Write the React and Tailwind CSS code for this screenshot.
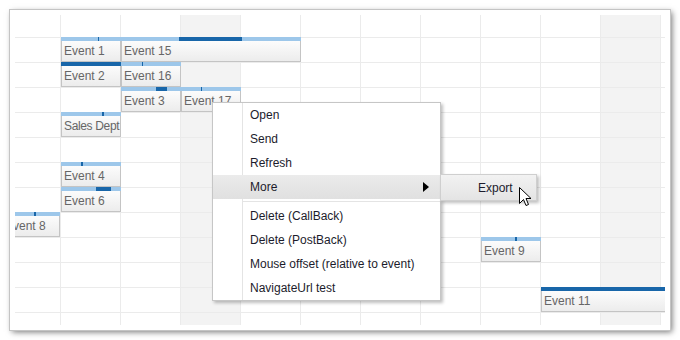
import React from "react";

const COLS = 12;
const ROWS = 13;

const events = [
  { text: "Event 1", left: 46, top: 22, w: 60, marks: [{ l: 37, w: 1 }] },
  { text: "Event 15", left: 106, top: 22, w: 180, marks: [{ l: 58, w: 63 }] },
  { text: "Event 2", left: 46, top: 47, w: 60, marks: [{ l: 0, w: 60 }] },
  { text: "Event 16", left: 106, top: 47, w: 60, marks: [{ l: 21, w: 1 }] },
  { text: "Event 3", left: 106, top: 72, w: 60, marks: [{ l: 35, w: 11 }] },
  { text: "Event 17", left: 166, top: 72, w: 60, marks: [{ l: 20, w: 1 }] },
  { text: "Sales Dept", left: 46, top: 97, w: 60, tight: true, marks: [{ l: 41, w: 2 }] },
  { text: "Event 4", left: 46, top: 147, w: 60, marks: [{ l: 20, w: 2 }] },
  { text: "Event 6", left: 46, top: 172, w: 60, marks: [{ l: 35, w: 15 }] },
  { text: "Event 8", left: -13, top: 197, w: 58, marks: [{ l: 32, w: 2 }] },
  { text: "Event 9", left: 466, top: 222, w: 60, marks: [{ l: 34, w: 2 }] },
  { text: "Event 11", left: 526, top: 272, w: 150, marks: [{ l: 0, w: 150 }] },
];

function Event({ e }) {
  return (
    <div
      className="absolute flex flex-col"
      style={{ left: e.left, top: e.top, width: e.w, height: 25 }}
    >
      <div className="relative h-[4px] bg-[#9dc7ea] shrink-0">
        {e.marks.map((m, i) => (
          <div
            key={i}
            className="absolute top-0 h-[4px] bg-[#1866a9]"
            style={{ left: m.l, width: m.w }}
          />
        ))}
      </div>
      <div
        className={
          "flex-1 flex items-center overflow-hidden whitespace-nowrap border border-t-0 border-[#c4c4c4] bg-gradient-to-b from-[#fcfcfc] to-[#ececec] pl-[2px] text-[12px] text-[#666666] " +
          (e.tight ? "tracking-[-0.35px]" : "")
        }
      >
        {e.text}
      </div>
    </div>
  );
}

function Grid() {
  const cells = [];
  for (let r = 0; r < ROWS; r++) {
    for (let c = 0; c < COLS; c++) {
      const shaded = c === 3 || c === 10;
      const lastCol = c === COLS - 1;
      const lastRow = r === ROWS - 1;
      cells.push(
        <div
          key={r + "-" + c}
          className={
            (shaded ? "bg-[#f3f3f3] " : "bg-white ") +
            (lastCol ? "" : "border-r border-[#ebebeb] ") +
            (lastRow ? "" : "border-b border-[#ebebeb]")
          }
        />
      );
    }
  }
  return (
    <div className="relative w-[650px] h-[310px] overflow-hidden">
      <div className="grid grid-cols-[46px_repeat(10,60px)_4px] grid-rows-[23px_repeat(11,25px)_12px] w-full h-full">
        {cells}
      </div>
      {events.map((e, i) => (
        <Event key={i} e={e} />
      ))}
    </div>
  );
}

function MenuItem({ children, active, arrow }) {
  return (
    <div
      className={
        "relative flex items-center h-[24px] pl-[37px] " +
        (active ? "bg-gradient-to-b from-[#ebebeb] to-[#e0e0e0]" : "")
      }
    >
      <span>{children}</span>
      {arrow && (
        <svg
          className="absolute right-[11px] top-[7px]"
          width="6"
          height="10"
          viewBox="0 0 6 10"
        >
          <path d="M0 0 L6 5 L0 10 Z" fill="#000" />
        </svg>
      )}
    </div>
  );
}

function Menu() {
  return (
    <div className="absolute left-[212px] top-[102px] w-[229px] bg-white border border-[#c6c6c6] shadow-[2px_2px_3px_rgba(0,0,0,0.25)] text-[12px] text-[#1c1c2c]">
      <div className="absolute left-[29px] top-0 bottom-0 w-px bg-[#e4e4e4]" />
      <div className="relative">
        <MenuItem>Open</MenuItem>
        <MenuItem>Send</MenuItem>
        <MenuItem>Refresh</MenuItem>
        <MenuItem active arrow>
          More
        </MenuItem>
        <div className="h-[5px] flex items-center pl-[30px]">
          <div className="h-px w-full bg-[#e4e4e4]" />
        </div>
        <MenuItem>Delete (CallBack)</MenuItem>
        <MenuItem>Delete (PostBack)</MenuItem>
        <MenuItem>Mouse offset (relative to event)</MenuItem>
        <MenuItem>NavigateUrl test</MenuItem>
      </div>
    </div>
  );
}

function SubMenu() {
  return (
    <div className="absolute left-[440px] top-[174px] w-[97px] h-[27px] border border-[#cfcfcf] bg-gradient-to-b from-[#f2f2f2] to-[#e4e4e4] shadow-[2px_2px_3px_rgba(0,0,0,0.25)] flex items-center pl-[37px] text-[12px] text-[#1c1c2c]">
      Export
    </div>
  );
}

function Cursor() {
  return (
    <svg
      className="absolute left-[519px] top-[187px]"
      width="13"
      height="20"
      viewBox="0 0 13 20"
    >
      <path
        d="M0.5 0.5 L0.5 16.5 L4.5 12.5 L7 18.5 L9.5 17.5 L7 11.5 L12 11.5 Z"
        fill="#fff"
        stroke="#000"
        strokeWidth="1"
        strokeLinejoin="miter"
      />
    </svg>
  );
}

export default function App() {
  return (
    <div
      className="relative w-[680px] h-[340px] bg-white overflow-hidden"
      style={{ fontFamily: '"Liberation Sans", Arial, sans-serif' }}
    >
      <div className="pt-[10px] pl-[10px]">
        <div className="w-[660px] h-[320px] p-[5px] bg-white shadow-[0_0_0_1px_#c4c4c4,2px_2px_6px_rgba(0,0,0,0.55)]">
          <Grid />
        </div>
      </div>
      <Menu />
      <SubMenu />
      <Cursor />
    </div>
  );
}
